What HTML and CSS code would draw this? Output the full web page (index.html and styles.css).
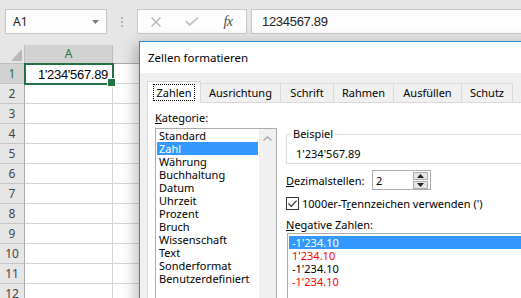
FILE: index.html
```html
<!DOCTYPE html>
<html lang="de">
<head>
<meta charset="utf-8">
<title>Zellen formatieren</title>
<link rel="stylesheet" href="styles.css">
</head>
<body>
<div class="app">
  <div class="topbar">
    <div class="namebox">
      <span>A1</span>
      <svg class="dd" width="7" height="4" viewBox="0 0 7 4"><path d="M0 0H7L3.5 4Z" fill="#7a7a7a"/></svg>
    </div>
    <div class="grip"><i></i><i></i><i></i></div>
    <div class="fxbox">
      <span class="fxbtn"><svg width="10" height="10" viewBox="0 0 10 10"><path d="M0.5 0.5L9.5 9.5M9.5 0.5L0.5 9.5" stroke="#b4b4b4" stroke-width="1.2" fill="none"/></svg></span>
      <span class="fxbtn"><svg width="14" height="9" viewBox="0 0 14 9"><path d="M0.8 4.2L4.6 8L13.2 0.6" stroke="#c2c2c2" stroke-width="1.8" fill="none"/></svg></span>
      <span class="fxbtn fx">fx</span>
    </div>
    <div class="formula">1234567.89</div>
  </div>

  <div class="sheet">
    <div class="corner"><svg width="11" height="12" viewBox="0 0 11 12"><path d="M11 0V12H0Z" fill="#b9b9b9"/></svg></div>
    <div class="ch sel">A</div>
    <div class="ch"></div>

    <div class="rh sel">1</div><div class="c a1">1'234'567.89</div><div class="c"></div>
    <div class="rh">2</div><div class="c"></div><div class="c"></div>
    <div class="rh">3</div><div class="c"></div><div class="c"></div>
    <div class="rh">4</div><div class="c"></div><div class="c"></div>
    <div class="rh">5</div><div class="c"></div><div class="c"></div>
    <div class="rh">6</div><div class="c"></div><div class="c"></div>
    <div class="rh">7</div><div class="c"></div><div class="c"></div>
    <div class="rh">8</div><div class="c"></div><div class="c"></div>
    <div class="rh">9</div><div class="c"></div><div class="c"></div>
    <div class="rh">10</div><div class="c"></div><div class="c"></div>
    <div class="rh">11</div><div class="c"></div><div class="c"></div>
    <div class="rh">12</div><div class="c"></div><div class="c"></div>
  </div>

  <div class="dialog">
    <div class="title">Zellen formatieren</div>
    <div class="dbody">
      <div class="tabs">
        <div class="tab active w-zahlen"><span class="focus">Zahlen</span></div>
        <div class="tab w-ausr">Ausrichtung</div>
        <div class="tab w-schrift">Schrift</div>
        <div class="tab w-rahmen">Rahmen</div>
        <div class="tab w-ausf">Ausfüllen</div>
        <div class="tab w-schutz">Schutz</div>
      </div>
      <div class="panel">
        <div class="leftcol">
          <div class="lbl"><u>K</u>ategorie:</div>
          <div class="listbox">
            <div class="items">
              <div class="item">Standard</div>
              <div class="item selected">Zahl</div>
              <div class="item">Währung</div>
              <div class="item">Buchhaltung</div>
              <div class="item">Datum</div>
              <div class="item">Uhrzeit</div>
              <div class="item">Prozent</div>
              <div class="item">Bruch</div>
              <div class="item">Wissenschaft</div>
              <div class="item">Text</div>
              <div class="item">Sonderformat</div>
              <div class="item">Benutzerdefiniert</div>
            </div>
            <div class="vscroll">
              <svg width="9" height="5" viewBox="0 0 9 5"><path d="M0.5 4.5L4.5 0.8L8.5 4.5" stroke="#a6a6a6" stroke-width="1.3" fill="none"/></svg>
            </div>
          </div>
        </div>
        <div class="rightcol">
          <fieldset class="group">
            <legend>Beispiel</legend>
            <div class="sample">1'234'567.89</div>
          </fieldset>
          <div class="spinrow">
            <span class="spinlbl"><u>D</u>ezimalstellen:</span>
            <div class="spin">
              <span class="spinval">2</span>
              <div class="spinbtns">
                <span class="sb"><svg width="7" height="4" viewBox="0 0 7 4"><path d="M0 4H7L3.5 0Z" fill="#222"/></svg></span>
                <span class="sb"><svg width="7" height="4" viewBox="0 0 7 4"><path d="M0 0H7L3.5 4Z" fill="#222"/></svg></span>
              </div>
            </div>
          </div>
          <div class="checkrow">
            <span class="cb"><svg width="11" height="11" viewBox="0 0 11 11"><path d="M1.5 5.5L4.3 8.3L9.6 2.6" stroke="#333" stroke-width="1.2" fill="none"/></svg></span>
            <span>1000er-T<u>r</u>ennzeichen verwenden (')</span>
          </div>
          <div class="lbl neg"><u>N</u>egative Zahlen:</div>
          <div class="neglist">
            <div class="nitem selected">-1'234.10</div>
            <div class="nitem red">1'234.10</div>
            <div class="nitem">-1'234.10</div>
            <div class="nitem red">-1'234.10</div>
          </div>
        </div>
      </div>
    </div>
  </div>
</div>
</body>
</html>
```

FILE: styles.css
```css
* { box-sizing: border-box; }
html, body { margin: 0; padding: 0; overflow: hidden; }
body {
  font-family: "Noto Sans", "Open Sans", sans-serif;
  font-size: 11px;
  color: #000;
  background: #fff;
}
.app {
  position: relative;
  width: 521px;
  height: 298px;
  overflow: hidden;
}

/* ---------- top bar ---------- */
.topbar {
  height: 45px;
  background: #e6e6e6;
  display: flex;
  align-items: flex-start;
  padding: 9px 0 0 5px;
}
.namebox {
  width: 102px;
  height: 25px;
  background: #fdfdfd;
  border: 1px solid #c6c6c6;
  display: flex;
  align-items: center;
  justify-content: space-between;
  padding: 0 7px;
  font-size: 12px;
  color: #222;
}
.grip {
  margin-left: 14px;
  width: 2px;
  height: 25px;
  display: flex;
  flex-direction: column;
  justify-content: center;
  gap: 2px;
}
.grip i {
  display: block;
  width: 2px;
  height: 2px;
  background: #b3b3b3;
}
.fxbox {
  margin-left: 14px;
  width: 110px;
  height: 25px;
  background: #fdfdfd;
  border: 1px solid #c6c6c6;
  display: grid;
  grid-template-columns: 36px 36px 36px;
  align-items: center;
}
.fxbtn {
  display: flex;
  justify-content: center;
  align-items: center;
  height: 23px;
}
.fx {
  font-family: "Liberation Serif", "DejaVu Serif", serif;
  font-style: italic;
  font-size: 14px;
  color: #4a4a4a;
  letter-spacing: -0.5px;
}
.formula {
  margin-left: 4px;
  flex: 1;
  height: 25px;
  background: #fdfdfd;
  border: 1px solid #c6c6c6;
  border-right: none;
  padding-left: 10px;
  font-family: "Liberation Sans", Arial, sans-serif;
  font-size: 13px;
  letter-spacing: -0.3px;
  line-height: 23px;
  color: #222;
}

/* ---------- sheet ---------- */
.sheet {
  display: grid;
  grid-template-columns: 25px 88px 1fr;
  grid-template-rows: 19px;
  grid-auto-rows: 20px;
}
.corner {
  background: #e6e6e6;
  border-right: 1px solid #bdbdbd;
  border-bottom: 1px solid #bdbdbd;
  display: flex;
  align-items: flex-end;
  justify-content: flex-end;
  padding: 0 2px 2px 0;
}
.ch {
  background: #e6e6e6;
  border-right: 1px solid #bdbdbd;
  border-bottom: 1px solid #ababab;
  text-align: center;
  line-height: 18px;
  color: #444;
  font-size: 12px;
}
.ch.sel {
  background: #d2d2d2;
  color: #217346;
}
.rh {
  background: #e6e6e6;
  border-right: 1px solid #ababab;
  border-bottom: 1px solid #c4c4c4;
  text-align: center;
  line-height: 19px;
  color: #444;
  font-size: 12px;
}
.rh.sel {
  background: #d2d2d2;
  color: #217346;
}
.c {
  border-right: 1px solid #d4d4d4;
  border-bottom: 1px solid #d4d4d4;
  background: #fff;
}
.a1 {
  position: relative;
  z-index: 2;
  outline: 2px solid #217346;
  outline-offset: -1px;
  text-align: right;
  padding-right: 4px;
  font-family: "Liberation Sans", Arial, sans-serif;
  font-size: 13px;
  letter-spacing: -0.3px;
  line-height: 19px;
  padding-top: 1px;
  color: #000;
}
.a1::after {
  content: "";
  position: absolute;
  right: -4px;
  bottom: -4px;
  width: 7px;
  height: 7px;
  background: #217346;
  border: 1px solid #fff;
}

/* ---------- dialog ---------- */
.dialog {
  position: absolute;
  left: 139px;
  top: 41px;
  width: 420px;
  height: 280px;
  border: 1px solid #2b88d8;
  background: #f0f0f0;
  box-shadow: -3px 3px 14px rgba(0, 0, 0, 0.28);
  z-index: 5;
}
.title {
  height: 31px;
  background: #fff;
  padding-left: 8px;
  line-height: 31px;
  font-size: 11.5px;
  color: #000;
}
.dbody {
  padding: 8px 0 0 7px;
}
.tabs {
  display: flex;
  align-items: flex-end;
  height: 21px;
  position: relative;
  z-index: 1;
}
.tab {
  height: 19px;
  border: 1px solid #d9d9d9;
  border-bottom: none;
  margin-left: -1px;
  text-align: center;
  line-height: 18px;
  background: #f0f0f0;
  color: #000;
}
.tab.active {
  height: 22px;
  margin-left: 0;
  margin-bottom: -1px;
  background: #fff;
  padding-top: 3px;
  line-height: 16px;
}
.focus {
  outline: 1px dotted #000;
  outline-offset: 0;
  padding: 0 2px;
  display: inline-block;
  line-height: 15px;
}
.w-zahlen { width: 54px; }
.w-ausr { width: 81px; }
.w-schrift { width: 54px; }
.w-rahmen { width: 61px; }
.w-ausf { width: 69px; }
.w-schutz { width: 52px; }

.panel {
  background: #fff;
  border: 1px solid #d9d9d9;
  height: 220px;
  display: grid;
  grid-template-columns: 122px 280px;
  column-gap: 9px;
  padding: 8px 0 0 7px;
  align-items: start;
}
.lbl {
  line-height: 14px;
  height: 14px;
}
.leftcol .lbl { margin-bottom: 3px; }
.listbox {
  border: 1px solid #acacac;
  height: 190px;
  display: flex;
}
.items {
  flex: 1;
}
.item {
  height: 13px;
  line-height: 13px;
  margin: 0 1px;
  padding-left: 2px;
  white-space: nowrap;
}
.item.selected,
.nitem.selected {
  background: #3399ff;
  color: #fff;
}
.vscroll {
  width: 17px;
  background: #f0f0f0;
  display: flex;
  justify-content: center;
  align-items: flex-start;
  padding-top: 7px;
}

/* right column */
.group {
  margin: 16px 0 0 0;
  padding: 0 0 2px 4px;
  border: 1px solid #dcdcdc;
  min-width: 0;
  width: 280px;
}
.group legend {
  padding: 0 2px;
  line-height: 14px;
}
.sample {
  margin: 6px 0 0 5px;
  line-height: 14px;
  height: 14px;
}
.spinrow {
  margin-top: 6px;
  display: flex;
  align-items: center;
  height: 20px;
}
.spinlbl {
  width: 86px;
}
.spin {
  width: 59px;
  height: 20px;
  border: 1px solid #acacac;
  display: flex;
  align-items: center;
  justify-content: space-between;
  padding: 0 2px 0 3px;
  background: #fff;
}
.spinbtns {
  display: flex;
  flex-direction: column;
  gap: 1px;
}
.sb {
  width: 15px;
  height: 8px;
  background: #e5e5e5;
  border: 1px solid #acacac;
  display: flex;
  align-items: center;
  justify-content: center;
}
.checkrow {
  margin-top: 7px;
  display: flex;
  align-items: center;
  height: 13px;
  white-space: nowrap;
}
.cb {
  width: 13px;
  height: 13px;
  border: 1px solid #333;
  background: #fff;
  margin-right: 3px;
  display: flex;
  align-items: center;
  justify-content: center;
}
.lbl.neg {
  margin-top: 8px;
  margin-bottom: 1px;
}
.neglist {
  border: 1px solid #acacac;
  margin-left: 1px;
  height: 80px;
  padding-top: 2px;
  width: 280px;
}
.nitem {
  height: 13px;
  line-height: 13px;
  margin: 0 1px;
  padding-left: 3px;
}
.nitem.red {
  color: #ff0000;
}
```
